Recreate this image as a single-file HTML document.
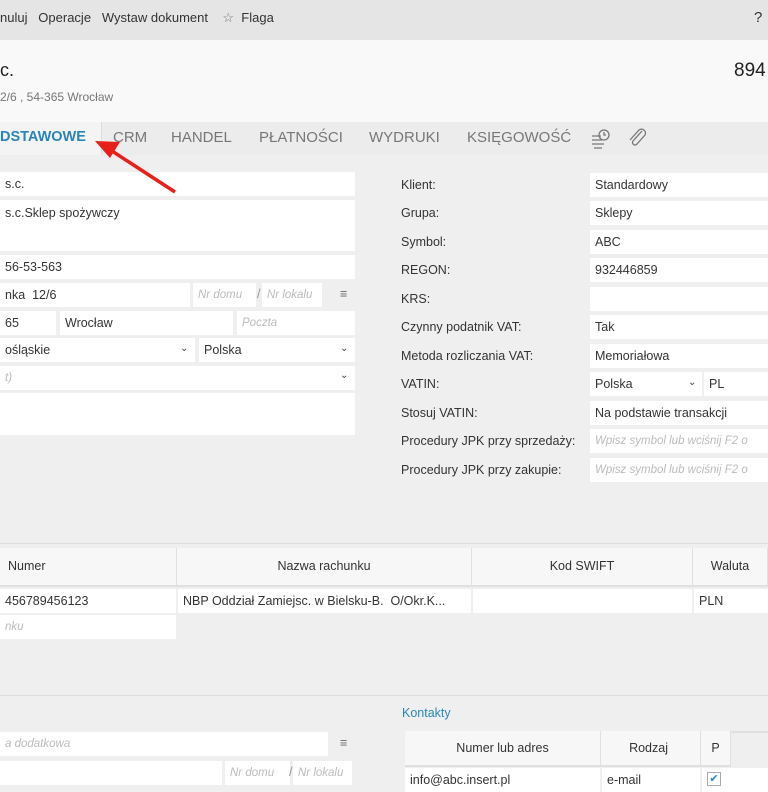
<!DOCTYPE html>
<html><head><meta charset="utf-8"><style>
*{box-sizing:border-box;margin:0;padding:0}
body{width:768px;height:787px;overflow:hidden;background:#efefef;font-family:"Segoe UI","Liberation Sans",sans-serif;font-size:12.5px;color:#333;position:relative}
.a{position:absolute}
.f{position:absolute;background:#fff;height:24px;line-height:24px;padding-left:5px;white-space:nowrap;overflow:hidden}
.ph{color:#bbb;font-style:italic;font-size:11.5px}
.l{position:absolute;left:401px;font-size:12.5px}
.chev{position:absolute;font-size:10px;color:#444}
.th{position:absolute;background:#f7f7f7;text-align:center;line-height:37px;border-right:1px solid #e0e0e0;border-bottom:2px solid #e0e0e0}
.tab{position:absolute;top:129px;font-size:15px;color:#777;white-space:nowrap}
</style></head><body>
<div class="a" style="left:0;top:0;width:768px;height:40px;background:#e5e5e5"></div>
<div class="a" style="left:0;top:10px;font-size:13px">nuluj&nbsp;&nbsp; Operacje&nbsp;&nbsp; Wystaw dokument&nbsp;&nbsp;&nbsp; <span style="color:#777">☆</span>&nbsp; Flaga</div>
<div class="a" style="left:754px;top:9px;font-size:15px">?</div>
<div class="a" style="left:0;top:40px;width:768px;height:82px;background:#f9f9f9"></div>
<div class="a" style="left:0;top:60px;font-size:18px;color:#222">c.</div>
<div class="a" style="left:0;top:90px;font-size:12px;color:#777">2/6 , 54-365 Wrocław</div>
<div class="a" style="left:734px;top:60px;font-size:19px;color:#222">894</div>
<div class="a" style="left:0;top:122px;width:768px;height:33px;background:#ececec"></div>
<div class="a" style="left:0;top:122px;width:102px;height:33px;background:#f4f4f4;border-right:1px solid #ddd"></div>
<div class="tab" style="left:0;color:#2a86b8;font-weight:bold;font-size:14.5px">DSTAWOWE</div>
<div class="tab" style="left:113px">CRM</div>
<div class="tab" style="left:171px">HANDEL</div>
<div class="tab" style="left:259px">PŁATNOŚCI</div>
<div class="tab" style="left:369px">WYDRUKI</div>
<div class="tab" style="left:467px">KSIĘGOWOŚĆ</div>
<svg class="a" style="left:590px;top:127px" width="60" height="24" fill="none" stroke="#777" stroke-width="1.3"><path d="M2 9h9M2 13h10M2 17h12M4 21h8"/><circle cx="14" cy="8" r="5"/><path d="M14 5v3h2"/><path d="M52 4l-9 10a2.5 2.5 0 0 0 4 3l8-9a4 4 0 0 0-6-5l-9 10"/></svg>

<div class="f" style="left:0;top:172px;width:355px">s.c.</div>
<div class="f" style="left:0;top:200px;width:355px;height:51px;line-height:26px">s.c.Sklep spożywczy</div>
<div class="f" style="left:0;top:255px;width:355px">56-53-563</div>
<div class="f" style="left:0;top:283px;width:190px">nka&nbsp; 12/6</div>
<div class="f ph" style="left:193px;top:283px;width:63px">Nr domu</div>
<div class="a" style="left:257px;top:287px;color:#999">/</div>
<div class="f ph" style="left:262px;top:283px;width:60px">Nr lokalu</div>
<div class="a" style="left:340px;top:287px;color:#666">≡</div>
<div class="f" style="left:0;top:311px;width:56px">65</div>
<div class="f" style="left:60px;top:311px;width:173px">Wrocław</div>
<div class="f ph" style="left:237px;top:311px;width:118px">Poczta</div>
<div class="f" style="left:0;top:338px;width:195px">ośląskie</div><div class="chev" style="left:180px;top:343px">⌄</div>
<div class="f" style="left:199px;top:338px;width:156px">Polska</div><div class="chev" style="left:340px;top:343px">⌄</div>
<div class="f ph" style="left:0;top:366px;width:355px">t)</div><div class="chev" style="left:340px;top:370px">⌄</div>
<div class="f" style="left:0;top:393px;width:355px;height:42px"></div>

<div class="l" style="top:178px">Klient:</div><div class="f" style="left:590px;top:173px;width:178px">Standardowy</div>
<div class="l" style="top:206px">Grupa:</div><div class="f" style="left:590px;top:201px;width:178px">Sklepy</div>
<div class="l" style="top:235px">Symbol:</div><div class="f" style="left:590px;top:230px;width:178px">ABC</div>
<div class="l" style="top:263px">REGON:</div><div class="f" style="left:590px;top:258px;width:178px">932446859</div>
<div class="l" style="top:292px">KRS:</div><div class="f" style="left:590px;top:287px;width:178px"></div>
<div class="l" style="top:320px">Czynny podatnik VAT:</div><div class="f" style="left:590px;top:315px;width:178px">Tak</div>
<div class="l" style="top:349px">Metoda rozliczania VAT:</div><div class="f" style="left:590px;top:344px;width:178px">Memoriałowa</div>
<div class="l" style="top:377px">VATIN:</div><div class="f" style="left:590px;top:372px;width:112px">Polska</div><div class="chev" style="left:688px;top:377px">⌄</div><div class="f" style="left:704px;top:372px;width:64px">PL</div>
<div class="l" style="top:406px">Stosuj VATIN:</div><div class="f" style="left:590px;top:401px;width:178px">Na podstawie transakcji</div>
<div class="l" style="top:434px">Procedury JPK przy sprzedaży:</div><div class="f ph" style="left:590px;top:429px;width:178px">Wpisz symbol lub wciśnij F2 o</div>
<div class="l" style="top:463px">Procedury JPK przy zakupie:</div><div class="f ph" style="left:590px;top:458px;width:178px">Wpisz symbol lub wciśnij F2 o</div>

<div class="a" style="left:0;top:543px;width:768px;height:1px;background:#ddd"></div>
<div class="th" style="left:0;top:548px;width:177px;text-align:left;padding-left:8px">Numer</div>
<div class="th" style="left:177px;top:548px;width:295px">Nazwa rachunku</div>
<div class="th" style="left:472px;top:548px;width:221px">Kod SWIFT</div>
<div class="th" style="left:693px;top:548px;width:75px">Waluta</div>
<div class="f" style="left:0;top:589px;width:176px">456789456123</div>
<div class="f" style="left:178px;top:589px;width:293px">NBP Oddział Zamiejsc. w Bielsku-B.&nbsp; O/Okr.K...</div>
<div class="f" style="left:473px;top:589px;width:219px"></div>
<div class="f" style="left:694px;top:589px;width:74px">PLN</div>
<div class="f ph" style="left:0;top:615px;width:176px">nku</div>
<div class="a" style="left:0;top:695px;width:768px;height:1px;background:#ddd"></div>
<div class="a" style="left:402px;top:706px;color:#2a86b8">Kontakty</div>
<div class="f ph" style="left:0;top:732px;width:328px">a dodatkowa</div>
<div class="a" style="left:340px;top:736px;color:#666">≡</div>
<div class="f" style="left:0;top:761px;width:222px"></div>
<div class="f ph" style="left:225px;top:761px;width:65px">Nr domu</div>
<div class="a" style="left:289px;top:765px;color:#999">/</div>
<div class="f ph" style="left:293px;top:761px;width:59px">Nr lokalu</div>
<div class="th" style="left:405px;top:731px;width:196px;line-height:34px">Numer lub adres</div>
<div class="th" style="left:601px;top:731px;width:100px;line-height:34px;text-align:right;padding-right:32px">Rodzaj</div>
<div class="th" style="left:701px;top:731px;width:30px;line-height:34px">P</div>
<div class="th" style="left:731px;top:731px;width:37px;line-height:34px"></div>
<div class="f" style="left:405px;top:768px;width:195px">info@abc.insert.pl</div>
<div class="f" style="left:602px;top:768px;width:98px">e-mail</div>
<div class="f" style="left:702px;top:768px;width:66px"></div>
<div class="a" style="left:707px;top:772px;width:14px;height:14px;border:1px solid #aaa;color:#2a86b8;font-size:11px;line-height:12px;text-align:center;background:#fff">✔</div>
<svg class="a" style="left:90px;top:136px" width="95" height="62"><line x1="85" y1="56" x2="22" y2="15" stroke="#e8201b" stroke-width="3.5"/><polygon points="5,5 30,6 20,22" fill="#e8201b"/></svg>
</body></html>
